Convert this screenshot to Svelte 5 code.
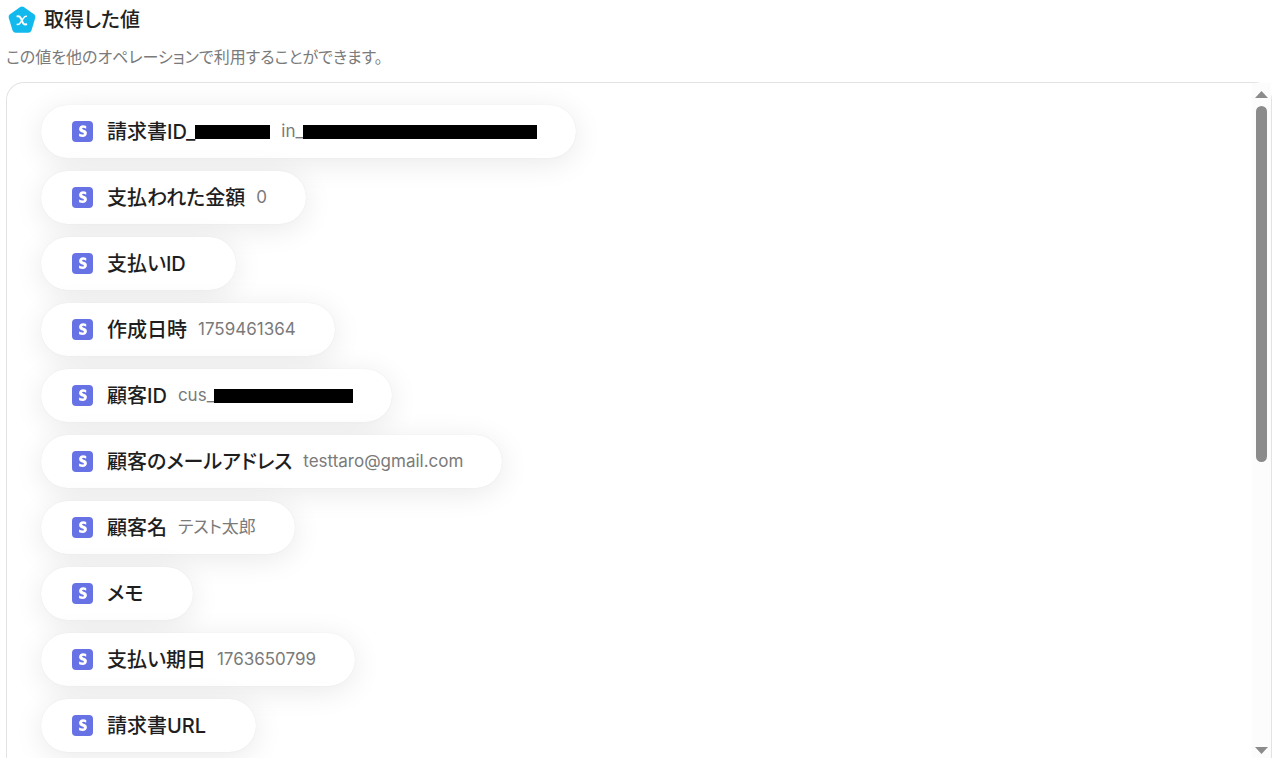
<script lang="ts">
  type Part = {text?: string; mask?: "short" | "medium" | "long"};
  type Output = {label: Part[]; value: Part[]};

  const outputs: Output[] = [
    {label: [{text: "請求書ID_"}, {mask: "short"}], value: [{text: "in_"}, {mask: "long"}]},
    {label: [{text: "支払われた金額"}], value: [{text: "0"}]},
    {label: [{text: "支払いID"}], value: []},
    {label: [{text: "作成日時"}], value: [{text: "1759461364"}]},
    {label: [{text: "顧客ID"}], value: [{text: "cus_"}, {mask: "medium"}]},
    {label: [{text: "顧客のメールアドレス"}], value: [{text: "testtaro@gmail.com"}]},
    {label: [{text: "顧客名"}], value: [{text: "テスト太郎"}]},
    {label: [{text: "メモ"}], value: []},
    {label: [{text: "支払い期日"}], value: [{text: "1763650799"}]},
    {label: [{text: "請求書URL"}], value: []},
  ];
</script>

{#snippet parts(items: Part[])}
  {#each items as part}{#if part.mask}<span class="mask {part.mask}"></span>{:else}{part.text}{/if}{/each}
{/snippet}

<main>
  <header>
    <svg class="logo" viewBox="0 0 28 28" aria-hidden="true">
      <path d="M12.2 1.1Q14 0 15.8 1.1L26 8.2Q27.8 9.6 27.3 11.7L23.5 24.2Q22.7 26.8 20.2 26.8H7.8Q5.3 26.8 4.5 24.2L.7 11.7Q.2 9.6 2 8.2Z" fill="#12b9ed" />
      <path d="M9.5 10.3c1.7-.2 2.6.5 3.3 1.9l2.1 4.6c.7 1.5 1.7 2.1 3.4 1.5" fill="none" stroke="#fff" stroke-width="2" stroke-linecap="round" />
      <path d="M18.3 10.3c-1.4 0-2 .7-2.800 1.800l-3.200 4.800c-.8 1.200-1.600 1.700-3 1.500" fill="none" stroke="#fff" stroke-width="1.6" stroke-linecap="round" />
    </svg>
    <h1>取得した値</h1>
  </header>
  <p>この値を他のオペレーションで利用することができます。</p>

  <section class="panel">
    <ul>
      {#each outputs as output}
        <li>
          <svg class="service" viewBox="0 0 21 21" aria-hidden="true">
            <rect width="21" height="21" rx="4" fill="#6772e5" />
            <path d="M14.2 5.1v2.6c-1.1-.6-2.2-.9-3-.9-.7 0-1.1.2-1.1.7 0 1.6 4.8.9 4.8 4.7 0 2.4-1.8 3.8-4.3 3.8-1.1 0-2.3-.2-3.5-.8v-2.7c1.1.6 2.4 1.1 3.5 1.1.7 0 1.3-.2 1.3-.8 0-1.7-4.8-1.1-4.8-4.8 0-2.3 1.6-3.7 4.1-3.7 1 0 2 .2 3 .8Z" fill="#fff" />
          </svg>
          <span class="label">{@render parts(output.label)}</span>
          <span class="value">{@render parts(output.value)}</span>
        </li>
      {/each}
    </ul>
    <div class="scrollbar">
      <button aria-label="上へ"><svg viewBox="0 0 13 7"><path d="M0 7 6.5 0 13 7Z" /></svg></button>
      <div class="track"><div class="thumb"></div></div>
      <button aria-label="下へ"><svg viewBox="0 0 13 7"><path d="M0 0 6.5 7 13 0Z" /></svg></button>
    </div>
  </section>
</main>

<style>
  :global(body) {
    overflow: hidden;
    background: #fff;
    font-family: Inter, "Noto Sans CJK JP", sans-serif;
    font-feature-settings: "palt";
  }

  main {
    display: flex;
    flex-direction: column;
    box-sizing: border-box;
    height: 100vh;
    padding: 4px 3px 0 6px;
  }

  header {
    display: flex;
    align-items: center;
    gap: 8px;
    height: 32px;
    padding-left: 2px;
  }
  .logo {
    width: 28px;
    height: 28px;
  }
  h1 {
    margin: 0;
    color: #222;
    font-size: 20px;
    font-weight: 500;
    line-height: 28px;
  }
  p {
    margin: 10px 0 14px;
    color: #7a7a7a;
    font-size: 16px;
    line-height: 22px;
  }

  .panel {
    display: flex;
    flex: 1;
    min-height: 0;
    border: 1px solid #e3e3e3;
    border-bottom: 0;
    border-radius: 18px 18px 0 0;
  }
  ul {
    display: flex;
    flex: 1;
    flex-direction: column;
    align-items: flex-start;
    gap: 13px;
    margin: 0;
    padding: 22px 34px;
    border-radius: 17px 0 0 0;
    overflow: hidden;
    list-style: none;
  }
  li {
    display: flex;
    flex: none;
    align-items: center;
    height: 53px;
    padding: 0 39px 0 31px;
    border-radius: 27px;
    background: #fff;
    box-shadow: 0 5px 30px rgba(0, 0, 0, 0.09), 0 0 1px rgba(0, 0, 0, 0.1);
    white-space: nowrap;
  }
  .service {
    width: 21px;
    height: 21px;
    margin-right: 14px;
  }
  .label {
    margin-right: 11px;
    color: #1e1e1e;
    font-size: 20px;
    font-weight: 500;
    line-height: 28px;
  }
  .value {
    padding-bottom: 2px;
    color: #7a7a7a;
    font-size: 17px;
    line-height: 24px;
  }

  .mask {
    display: inline-block;
    height: 14px;
    background: #000;
  }
  .value .mask {vertical-align: -2px}
  .short {width: 75px}
  .medium {width: 139px}
  .long {width: 234px}

  .scrollbar {
    display: flex;
    flex-direction: column;
    width: 19px;
    background: #fcfcfc;
  }
  button {
    display: flex;
    justify-content: center;
    align-items: center;
    height: 23px;
    padding: 0;
    border: 0;
    background: none;
  }
  button:last-child {height: 16px}
  button svg {
    width: 13px;
    height: 7px;
    fill: #8b8b8b;
  }
  .track {
    flex: 1;
    padding: 0 4px;
  }
  .thumb {
    width: 11px;
    height: 56%;
    border-radius: 6px;
    background: #8b8b8b;
  }
</style>
